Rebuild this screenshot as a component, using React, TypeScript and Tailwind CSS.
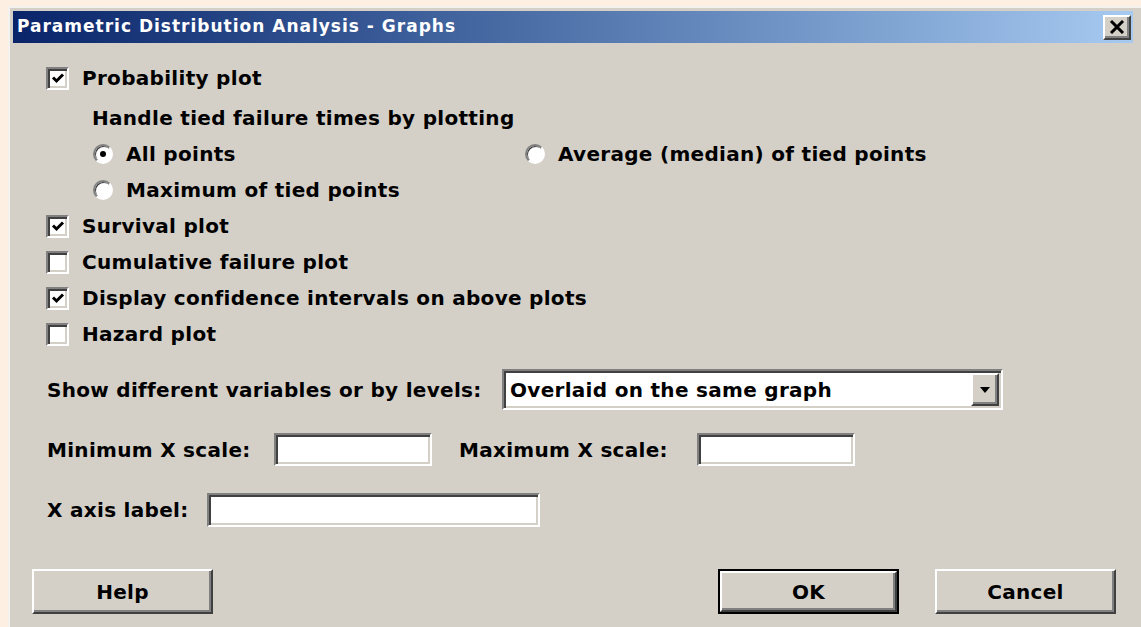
import React from "react";

const font = "font-['DejaVu_Sans',sans-serif] font-bold text-[20px] tracking-[0.3px] text-black";
const sunken =
  "border-2 border-t-[#808080] border-l-[#808080] border-b-white border-r-white shadow-[inset_2px_2px_0_#404040,inset_-2px_-2px_0_#d4d0c8]";
const raised =
  "border-2 border-t-white border-l-white border-b-[#404040] border-r-[#404040] shadow-[inset_-2px_-2px_0_#808080]";

const CheckBox = ({ checked, label }: { checked?: boolean; label: string }) => (
  <div className="flex h-[36px] items-center">
    <div className={`flex h-[23px] w-[23px] items-center justify-center bg-white ${sunken}`}>
      {checked && (
        <svg width="14" height="14" viewBox="0 0 14 14">
          <path d="M2 6.5 L5.5 10 L12 3.5" fill="none" stroke="#000" strokeWidth="3" />
        </svg>
      )}
    </div>
    <span className="ml-[13px]">{label}</span>
  </div>
);

const Radio = ({ selected, label }: { selected?: boolean; label: string }) => (
  <div className="flex h-[36px] items-center">
    <div className="flex h-[20px] w-[20px] items-center justify-center rounded-full border-2 border-t-[#808080] border-l-[#808080] border-b-white border-r-white bg-white shadow-[inset_1px_1px_0_#404040]">
      {selected && <div className="h-[6px] w-[6px] rounded-full bg-black" />}
    </div>
    <span className="ml-[13px]">{label}</span>
  </div>
);

const TextBox = ({ width }: { width: string }) => (
  <div className={`h-[33px] bg-white ${sunken} ${width}`} />
);

const Button = ({ title, isDefault }: { title: string; isDefault?: boolean }) =>
  isDefault ? (
    <div className="h-[45px] w-[181px] border-2 border-black">
      <div className={`flex h-full w-full items-center justify-center bg-[#d4d0c8] ${raised}`}>
        {title}
      </div>
    </div>
  ) : (
    <div className={`flex h-[45px] w-[181px] items-center justify-center bg-[#d4d0c8] ${raised}`}>
      {title}
    </div>
  );

export default function App() {
  return (
    <div className="h-[627px] w-full overflow-hidden bg-[#fdefe1] pl-2 pt-[6px]">
      <div className="h-full border-l-2 border-t-2 border-[#f4f2ee] bg-[#d4d0c8] pl-[3px] pr-[8px] pt-[3px]">
        {/* title bar */}
        <div className="flex h-[32px] items-center justify-between bg-linear-to-r from-[#0a246a] to-[#a6caf0] pl-[4px] pr-[2px]">
          <span className="font-['DejaVu_Sans',sans-serif] text-[17px] font-bold tracking-[1px] text-white">
            Parametric Distribution Analysis - Graphs
          </span>
          <div className={`flex h-[25px] w-[28px] items-center justify-center bg-[#d4d0c8] ${raised}`}>
            <svg width="16" height="14" viewBox="0 0 16 14">
              <path d="M2 1 L14 13 M14 1 L2 13" stroke="#000" strokeWidth="3" />
            </svg>
          </div>
        </div>

        <div className={font}>
          <div className="pl-[33px] pt-[17px]">
            <CheckBox checked label="Probability plot" />
            <div className="mt-1 flex h-[36px] items-center pl-[46px]">
              Handle tied failure times by plotting
            </div>
            <div className="grid grid-cols-[432px_1fr] pl-[47px]">
              <Radio selected label="All points" />
              <Radio label="Average (median) of tied points" />
              <Radio label="Maximum of tied points" />
            </div>
            <CheckBox checked label="Survival plot" />
            <CheckBox label="Cumulative failure plot" />
            <CheckBox checked label="Display confidence intervals on above plots" />
            <CheckBox label="Hazard plot" />

            <div className="mt-[17px] flex items-center">
              <span className="w-[456px] pl-[1px]">Show different variables or by levels:</span>
              <div className={`flex h-[41px] w-[501px] items-center justify-between bg-white pl-[6px] pr-[2px] ${sunken}`}>
                <span>Overlaid on the same graph</span>
                <div className={`flex h-[33px] w-[28px] items-center justify-center bg-[#d4d0c8] ${raised}`}>
                  <svg width="10" height="6" viewBox="0 0 10 6">
                    <path d="M0 0 H10 L5 6 Z" fill="#000" />
                  </svg>
                </div>
              </div>
            </div>

            <div className="mt-[23px] flex items-center">
              <span className="w-[228px] pl-[1px]">Minimum X scale:</span>
              <TextBox width="w-[158px]" />
              <span className="ml-[27px] w-[238px]">Maximum X scale:</span>
              <TextBox width="w-[158px]" />
            </div>

            <div className="mt-[27px] flex items-center">
              <span className="w-[161px] pl-[1px]">X axis label:</span>
              <TextBox width="w-[333px] h-[34px]" />
            </div>
          </div>

          <div className="mt-[42px] flex pl-[19px]">
            <Button title="Help" />
            <div className="ml-auto mr-[17px] flex gap-[36px]">
              <Button title="OK" isDefault />
              <Button title="Cancel" />
            </div>
          </div>
        </div>
      </div>
    </div>
  );
}
